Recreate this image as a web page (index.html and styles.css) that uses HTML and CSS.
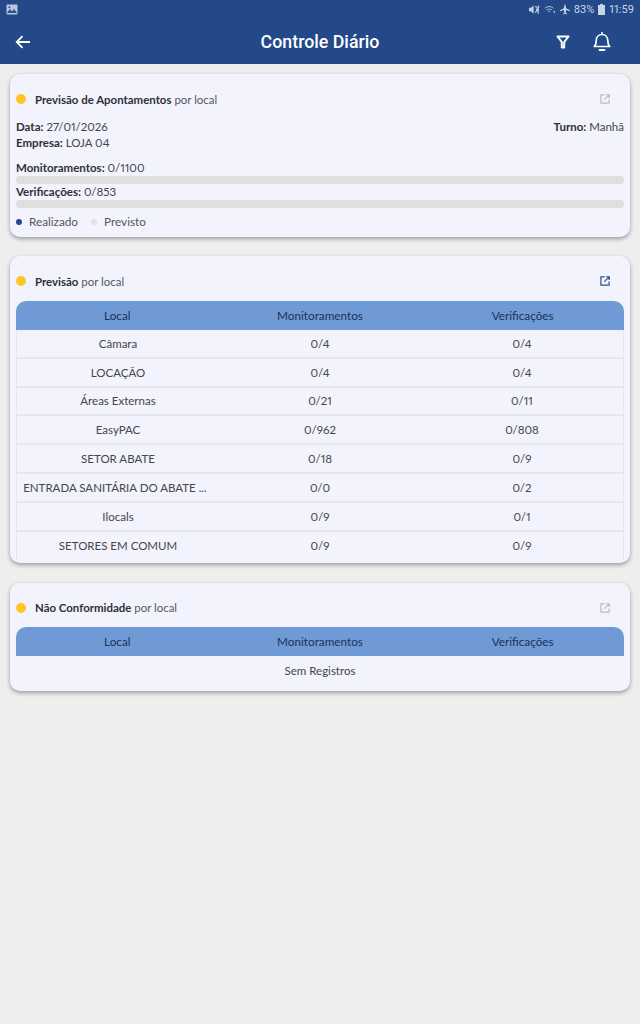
FILE: index.html
```html
<!DOCTYPE html>
<html lang="pt">
<head>
<meta charset="utf-8">
<title>Controle Diário</title>
<link rel="stylesheet" href="styles.css">
</head>
<body>
<header class="appbar">
  <div class="status">
    <svg class="st-img" width="12" height="11" viewBox="0 0 12 11"><rect x="0.5" y="0.5" width="11" height="10" rx="1" fill="#b9c8e0"/><path d="M1 9l3-4 2 2.500L8 5l3 4z" fill="#2c5191"/><circle cx="3.400" cy="3.200" r="1" fill="#2c5191"/></svg>
    <div class="st-right">
      <svg width="11" height="11" viewBox="0 0 12 11"><path d="M0 3.500h2L5 1v9L2 7.500H0z" fill="#c9d4e6"/><path d="M7 2l1.500 1.500M10 1v9M7.500 5h1M7 9l4-7" stroke="#c9d4e6" stroke-width="1.300" fill="none"/></svg>
      <svg width="12" height="11" viewBox="0 0 14 11"><path d="M1 4a8 8 0 0 1 10 0M3 6a5 5 0 0 1 6 0M5 8a2.500 2.500 0 0 1 2 0" stroke="#c9d4e6" stroke-width="1" fill="none"/><path d="M11 8h2M12 7v3" stroke="#c9d4e6" stroke-width="0.800"/></svg>
      <svg width="10" height="11" viewBox="0 0 11 11"><path d="M5 0h1l.7 4L11 6.200V7.300L6.700 6 6.300 9 7.500 10V11L5.500 10.300 3.500 11V10L4.700 9 4.300 6 0 7.300V6.200L4.300 4z" fill="#c9d4e6"/></svg>
      <span class="st-text">83%</span>
      <svg width="7" height="11" viewBox="0 0 7 11"><path d="M2 0h3v1h2v10H0V1h2z" fill="#c9d4e6"/></svg>
      <span class="st-text">11:59</span>
    </div>
  </div>
  <div class="toolbar">
    <div class="tb-left">
      <svg width="16" height="14" viewBox="0 0 16 14"><path d="M15 7H2M7.500 1.200 1.700 7l5.800 5.800" stroke="#fff" stroke-width="1.800" fill="none"/></svg>
    </div>
    <h1 class="title">Controle Diário</h1>
    <div class="tb-right">
      <svg width="14" height="14" viewBox="0 0 14 14"><path d="M1.500 1.500h11L8.200 7v5.500H5.800V7z" fill="none" stroke="#fff" stroke-width="2" stroke-linejoin="round"/></svg>
      <svg width="18" height="21" viewBox="0 0 18 21"><path d="M1.200 15.500c1.500-1.400 2-2.800 2-5.800 0-3.700 2.400-6.200 5.800-6.200s5.800 2.500 5.800 6.200c0 3 .5 4.400 2 5.800z" fill="none" stroke="#fff" stroke-width="1.700" stroke-linejoin="round"/><path d="M9 1v2.500" stroke="#fff" stroke-width="1.500"/><path d="M6.500 19h5" stroke="#fff" stroke-width="1.800" stroke-linecap="round"/></svg>
    </div>
  </div>
</header>

<main class="content">
  <section class="card card-first">
    <div class="card-head">
      <span class="dot"></span>
      <p class="card-title"><b>Previsão de Apontamentos</b> por local</p>
      <svg class="ext" width="10" height="10" viewBox="0 0 11 11"><path d="M5 1H1v9h9V6M6.500.8h3.700v3.700M10 1 4.800 6.200" fill="none" stroke="#b9bbc4" stroke-width="1.300"/></svg>
    </div>
    <div class="info">
      <div class="info-col">
        <p><b>Data:</b> 27/01/2026</p>
        <p><b>Empresa:</b> LOJA 04</p>
      </div>
      <p><b>Turno:</b> Manhã</p>
    </div>
    <p class="metric metric-first"><b>Monitoramentos:</b> 0/1100</p>
    <div class="bar"></div>
    <p class="metric"><b>Verificações:</b> 0/853</p>
    <div class="bar"></div>
    <div class="legend">
      <span class="leg-dot leg-blue"></span><span class="leg-text">Realizado</span>
      <span class="leg-dot leg-grey"></span><span>Previsto</span>
    </div>
  </section>

  <section class="card">
    <div class="card-head">
      <span class="dot"></span>
      <p class="card-title"><b>Previsão</b> por local</p>
      <svg class="ext" width="10" height="10" viewBox="0 0 11 11"><path d="M5 1H1v9h9V6M6.500.8h3.700v3.700M10 1 4.800 6.200" fill="none" stroke="#2b4f8e" stroke-width="1.300"/></svg>
    </div>
    <div class="table">
      <div class="row row-head"><span>Local</span><span>Monitoramentos</span><span>Verificações</span></div>
      <div class="row"><span>Câmara</span><span>0/4</span><span>0/4</span></div>
      <div class="row"><span>LOCAÇÃO</span><span>0/4</span><span>0/4</span></div>
      <div class="row"><span>Áreas Externas</span><span>0/21</span><span>0/11</span></div>
      <div class="row"><span>EasyPAC</span><span>0/962</span><span>0/808</span></div>
      <div class="row"><span>SETOR ABATE</span><span>0/18</span><span>0/9</span></div>
      <div class="row"><span class="clip">ENTRADA SANITÁRIA DO ABATE ...</span><span>0/0</span><span>0/2</span></div>
      <div class="row"><span>Ilocals</span><span>0/9</span><span>0/1</span></div>
      <div class="row row-last"><span>SETORES EM COMUM</span><span>0/9</span><span>0/9</span></div>
    </div>
  </section>

  <section class="card card-last">
    <div class="card-head">
      <span class="dot"></span>
      <p class="card-title"><b>Não Conformidade</b> por local</p>
      <svg class="ext" width="10" height="10" viewBox="0 0 11 11"><path d="M5 1H1v9h9V6M6.500.8h3.700v3.700M10 1 4.800 6.200" fill="none" stroke="#b9bbc4" stroke-width="1.300"/></svg>
    </div>
    <div class="table">
      <div class="row row-head"><span>Local</span><span>Monitoramentos</span><span>Verificações</span></div>
      <p class="empty">Sem Registros</p>
    </div>
  </section>
</main>
</body>
</html>
```
FILE: styles.css
```css
* { box-sizing: border-box; }
html, body { margin: 0; height: 100%; }
body { background: #eeeeee; font-family: Lato, sans-serif; font-size: 12px; color: #44464c; height: 1024px; overflow: hidden; font-variant-numeric: proportional-nums; }
p, h1 { margin: 0; }
b { font-weight: 700; color: #2e3035; }

.appbar { background: #234988; height: 64px; color: #fff; }
.status { height: 20px; display: flex; align-items: center; justify-content: space-between; padding: 0 6px 1px 6px; }
.st-right { display: flex; align-items: center; gap: 4px; }
.st-text { font-family: Roboto, sans-serif; font-size: 11px; color: #c9d4e6; }
.toolbar { height: 44px; display: grid; grid-template-columns: 1fr auto 1fr; align-items: center; padding: 0 29px 1px; }
.tb-left { display: flex; margin-left: -14px; }
.tb-right { display: flex; align-items: center; justify-content: flex-end; gap: 23px; }
.title { font-family: Roboto, sans-serif; font-size: 17.800px; font-weight: 500; text-align: center; }

.content { padding: 10px 10px 0; display: flex; flex-direction: column; gap: 19px; }
.card { background: #f2f3fd; border-radius: 10px; padding: 0 6px; height: 307px; box-shadow: 0 2px 4px rgba(0,0,0,.35); }
.card-first { height: 163px; }
.card-last { height: 108px; margin-top: 1px; }
.card-last .card-head { height: 44px; }
.card-head { height: 45px; display: flex; align-items: center; padding: 5px 14px 0 0; }
.dot { width: 10px; height: 10px; border-radius: 50%; background: #fdc526; margin-right: 9px; }
.card-title { flex: 1; font-size: 11.450px; color: #55575d; }

.info { display: flex; justify-content: space-between; line-height: 16px; font-size: 11.500px; }
.metric { font-size: 11.500px; line-height: 16px; height: 16px; }
.metric-first { margin-top: 9px; }
.bar { height: 8px; border-radius: 4px; background: #dfdfe1; }
.legend { display: flex; align-items: center; margin-top: 7px; font-size: 11.750px; line-height: 14px; color: #55575d; }
.leg-dot { width: 6px; height: 6px; border-radius: 50%; margin-right: 7px; }
.leg-blue { background: #234988; }
.leg-grey { background: #e2e2e4; margin-left: 13px; margin-right: 7px; }

.row { display: grid; grid-template-columns: repeat(3, 1fr); height: 28.800px; align-items: center; text-align: center; font-size: 11.500px; border-bottom: 2px solid #e6e6ec; border-left: 1px solid #e6e6ec; border-right: 1px solid #e6e6ec; }
.row-head { background: #6f9ad6; color: #1d3155; border: 0; border-radius: 10px 10px 0 0; font-size: 11.750px; height: 29px; padding-bottom: 1px; }
.row-last { border-bottom: 0; }
.clip { padding-right: 6px; }
.empty { text-align: center; font-size: 11.500px; line-height: 29px; }
```
